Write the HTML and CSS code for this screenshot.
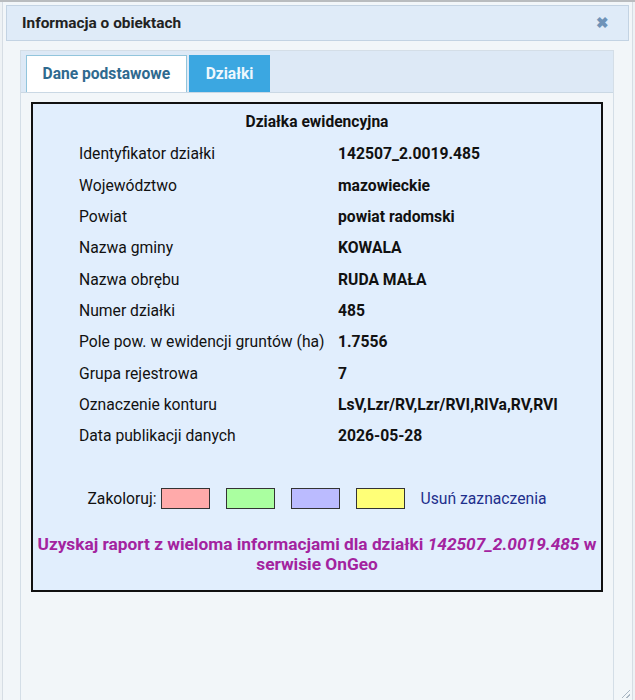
FILE: index.html
```html
<!DOCTYPE html>
<html lang="pl">
<head>
  <meta charset="UTF-8"/>
  <title>Informacja o obiektach</title>
  <link rel="stylesheet" href="styles.css">
</head>
<body>
  <div class="topline"></div>

  <!-- Dialog -->
  <div class="dialog">
    <div class="dialog-head">
      <span class="dialog-title">Informacja o obiektach</span>
      <span class="close-btn">&#10006;</span>
    </div>

    <div class="dialog-body">
      <div class="tabs">
        <div class="tab-bar">
          <a class="tab">Dane podstawowe</a>
          <a class="tab active">Działki</a>
        </div>

        <div class="tab-content">
          <div class="parcel">
            <h3>Działka ewidencyjna</h3>
            <div class="rows">
              <div class="lbl">Identyfikator działki</div><div class="val">142507_2.0019.485</div>
              <div class="lbl">Województwo</div><div class="val">mazowieckie</div>
              <div class="lbl">Powiat</div><div class="val">powiat radomski</div>
              <div class="lbl">Nazwa gminy</div><div class="val">KOWALA</div>
              <div class="lbl">Nazwa obrębu</div><div class="val">RUDA MAŁA</div>
              <div class="lbl">Numer działki</div><div class="val">485</div>
              <div class="lbl">Pole pow. w ewidencji gruntów (ha)</div><div class="val">1.7556</div>
              <div class="lbl">Grupa rejestrowa</div><div class="val">7</div>
              <div class="lbl">Oznaczenie konturu</div><div class="val">LsV,Lzr/RV,Lzr/RVI,RIVa,RV,RVI</div>
              <div class="lbl">Data publikacji danych</div><div class="val">2026-05-28</div>
            </div>

            <div class="colors">
              <span>Zakoloruj:</span>
              <span class="swatch red"></span>
              <span class="swatch green"></span>
              <span class="swatch blue"></span>
              <span class="swatch yellow"></span>
              <a class="clear">Usuń zaznaczenia</a>
            </div>

            <a class="report">Uzyskaj raport z wieloma informacjami dla działki <i>142507_2.0019.485</i>&nbsp;w serwisie OnGeo</a>
          </div>
        </div>
      </div>
    </div>
    <span class="grip"></span>
  </div>
</body>
</html>
```

FILE: styles.css
```css
* { margin:0; padding:0; box-sizing:border-box }
html, body { height:100% }
body {
  font-family:Roboto,"Liberation Sans",sans-serif;
  background:#eef2f5;
  color:#111;
  overflow:hidden;
}
a { text-decoration:none; color:inherit }

.topline { height:2px; background:#b9bcbf }

/* Dialog */
.dialog {
  position:relative;
  height:calc(100% - 2px);
  margin:0 2px;
  padding:3px 3px 0;
  background:#f2f6f9;
  border-left:1px solid #d6dde4;
  border-right:1px solid #d6dde4;
  display:flex; flex-direction:column;
}
.dialog-head {
  height:36px;
  display:flex; align-items:center; justify-content:space-between;
  padding:0 19px 0 15px;
  background:#dfebf8;
  border:1px solid #c3d3e3;
}
.dialog-title { font-weight:700; font-size:15.4px; color:#222 }
.close-btn { font-size:15px; color:#6f93b8; font-weight:700 }

.dialog-body { flex:1; padding:9px 15px 0 14px; display:flex }
.tabs {
  flex:1;
  border:1px solid #d4dee7; border-bottom:none;
  display:flex; flex-direction:column;
}
.tab-bar {
  display:flex; gap:2px;
  padding:4px 5px 0;
  background:#dde9f6;
  border-bottom:1px solid #cad8e4;
}
.tab {
  height:37px;
  display:flex; align-items:center;
  padding:0 16px 0 15.5px;
  font-size:15.6px; font-weight:700;
}
.tab:first-child {
  background:#fff; color:#2f6a8f;
  border:1px solid #92c5dc; border-bottom:none;
}
.tab.active { background:#3ba7e1; color:#eef7fd; padding:0 16.5px }

.tab-content { flex:1; padding:9px 10px }

/* Parcel card */
.parcel {
  background:#e1eefd;
  border:2px solid #111;
  padding:8px 0 16px;
}
.parcel h3 { text-align:center; font-size:15.6px; font-weight:700; line-height:20px }
.rows {
  display:grid; grid-template-columns:259px auto;
  padding:0 0 0 46px;
  margin-top:6px;
  font-size:15.7px;
}
.rows div { height:31.35px; display:flex; align-items:center }
.rows .val { font-weight:700 }

.colors {
  display:flex; align-items:center; justify-content:center;
  gap:16px;
  margin-top:37px;
  font-size:15.7px;
}
.colors span:first-child { margin-right:-12px }
.swatch { width:49px; height:21px; border:1px solid #333 }
.red { background:#ffaaaa }
.green { background:#aaffa0 }
.blue { background:#bbbbff }
.yellow { background:#ffff77 }
.clear { color:#1e2f8c }

.report {
  display:block;
  margin:25px 2px 0;
  text-align:center;
  font-size:17.3px; font-weight:700; line-height:20px;
  color:#a3239f;
}

.grip {
  position:absolute; right:2px; bottom:2px;
  width:8px; height:8px;
  background:linear-gradient(135deg, transparent 45%, #a9b6c3 45%, #a9b6c3 55%, transparent 55%, transparent 75%, #a9b6c3 75%, #a9b6c3 85%, transparent 85%);
}
```
